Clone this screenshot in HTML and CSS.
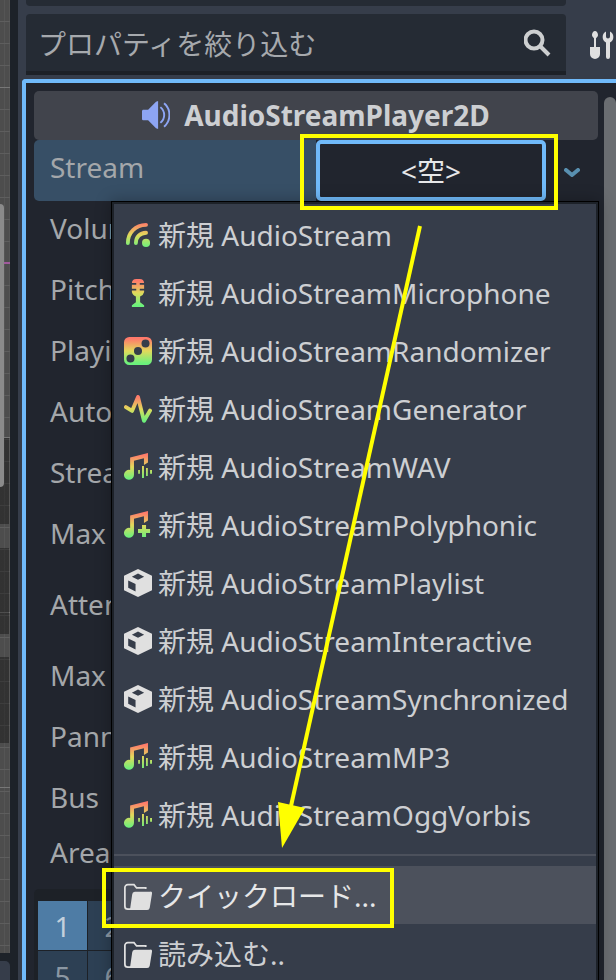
FILE: index.html
```html
<!DOCTYPE html>
<html lang="ja">
<head>
    <meta charset="UTF-8">
    <meta name="viewport" content="width=device-width, initial-scale=1.0">
    <title>インスペクター</title>
    <link rel="stylesheet" href="styles.css">
</head>
<body>
    <!-- アイコン定義 -->
    <svg class="icon-defs" width="0" height="0" aria-hidden="true">
        <defs>
            <linearGradient id="audio" gradientUnits="userSpaceOnUse" x1="0" y1="1" x2="0" y2="15">
                <stop offset="0" stop-color="#ff7a6b"/>
                <stop offset="0.5" stop-color="#e1da5b"/>
                <stop offset="1" stop-color="#6bf17c"/>
            </linearGradient>
            <symbol id="i-stream" viewBox="0 0 16 16">
                <g fill="none" stroke="url(#audio)" stroke-width="2.2" stroke-linecap="round">
                    <path d="M2.2 12.6C2.2 6.6 6.6 2.3 12.6 2.2"/>
                    <path d="M6.8 12.6C6.8 9.2 9.2 6.8 12.6 6.7"/>
                </g>
                <circle cx="12.6" cy="12.5" r="2.3" fill="url(#audio)"/>
            </symbol>
            <symbol id="i-mic" viewBox="0 0 16 16">
                <path fill="url(#audio)" d="M7 0h2a2.5 2.5 0 0 1 2.5 2.300H9v1h2.500v2.300H9v1h2.500v.8A3.500 3.500 0 0 1 9.200 10v3.300l2.300 1.700v1h-7v-1l2.300-1.700V10a3.500 3.500 0 0 1-2.300-2.600v-.8H7v-1H4.500V3.300H7v-1H4.500A2.500 2.500 0 0 1 7 0z"/>
            </symbol>
            <symbol id="i-random" viewBox="0 0 16 16">
                <path fill="url(#audio)" fill-rule="evenodd" d="M3 0h10a3 3 0 0 1 3 3v10a3 3 0 0 1-3 3H3a3 3 0 0 1-3-3V3a3 3 0 0 1 3-3zM12.3 1.4a2.3 2.3 0 1 0 0 4.6 2.3 2.3 0 0 0 0-4.6zM8 5.7a2.3 2.3 0 1 0 0 4.6 2.3 2.3 0 0 0 0-4.6zM3.7 10a2.3 2.3 0 1 0 0 4.6 2.3 2.3 0 0 0 0-4.6z"/>
            </symbol>
            <symbol id="i-generator" viewBox="0 0 16 16">
                <path fill="none" stroke="url(#audio)" stroke-width="2.2" stroke-linecap="round" stroke-linejoin="round" d="M1.1 6.9l3.5 2.2L8 1.1l3.4 13.7L14.9 8.9"/>
            </symbol>
            <symbol id="i-note" viewBox="0 0 16 16">
                <path fill="url(#audio)" d="M13.7 0v5.4l-2.3 1.5V3L5.7 4.4v8.1A2.85 2.85 0 1 1 3.5 9.7V2.6z"/>
            </symbol>
            <symbol id="i-wave" viewBox="0 0 16 16">
                <use href="#i-note"/>
                <path fill="url(#audio)" d="M8.1 9.7h1v2.2h-1zM10.3 7.4h1.1v6.9h-1.1zM12.6 8.6h1v4.6h-1zM14.9 9.7H16v2.2h-1.1z"/>
            </symbol>
            <symbol id="i-poly" viewBox="0 0 16 16">
                <use href="#i-note"/>
                <path fill="url(#audio)" d="M10.3 8h2.3v2.3h2.3v2.3h-2.3v2.3h-2.3v-2.3H8v-2.3h2.3z"/>
            </symbol>
            <symbol id="i-cube" viewBox="0 0 16 16">
                <path fill="#e0e0e0" fill-rule="evenodd" d="M8 0l8 3.8v8.4L8 16l-8-3.8V3.800zM8 2.600L4.500 4.400 8 6.100l3.500-1.700zM2.400 6.600v4.100l4.200 2.100V8.600z"/>
            </symbol>
            <symbol id="i-folder" viewBox="0 0 16 16">
                <path fill="none" stroke="#e0e0e0" d="M12.4 4V3.4H7.2L5.7 1.500H2.200A1.700 1.700 0 0 0 .5 3.200v10.600a1.700 1.700 0 0 0 1.700 1.700H4"/>
                <path fill="#e0e0e0" d="M6.200 5.500H15a1 1 0 0 1 1 1.200l-1.300 8A1.500 1.500 0 0 1 13.200 16H3.400l1.300-9a1.600 1.600 0 0 1 1.500-1.500z"/>
            </symbol>
        </defs>
    </svg>

    <div class="main-area">
        <div class="viewport"></div>
        <div class="bottom-panel"></div>
    </div>

    <div class="dock">
        <div class="object-bar"></div>

        <div class="filter-row">
            <label class="filter">
                <input type="text" placeholder="プロパティを絞り込む" aria-label="プロパティを絞り込む">
                <svg class="icon" viewBox="0 0 28 28" fill="none" stroke="#cdcfd0" stroke-width="4">
                    <circle cx="10" cy="11" r="8.5"/>
                    <path d="M16 17l9 9"/>
                </svg>
            </label>
            <button class="tools-btn" type="button" aria-label="ツール">
                <svg class="icon" viewBox="0 0 28 28" fill="#e0e0e0">
                    <path d="M7 0c1.700 0 3 2 3 4 0 1.500-1 2.300-2 3.200V16h4v7a5 5 0 0 1-10 0v-7h4V7.200C5 6.300 4 5.500 4 4c0-2 1.300-4 3-4z"/>
                    <path d="M18 .5v5a2 2 0 0 0 4 0v-5a6.200 6.200 0 0 1 0 11V26a2 2 0 0 1-4 0V11.500a6.200 6.200 0 0 1 0-11z"/>
                </svg>
            </button>
        </div>

        <div class="inspector">
            <div class="properties">
                <h2 class="category">
                    <svg class="icon" viewBox="0 0 16 16">
                        <path fill="#8da5f3" d="M0 5.500L.5 5h3L8 .4 9.200 0v16L8 15.600 3.500 11h-3L0 10.500z"/>
                        <g fill="none" stroke="#8da5f3" stroke-width="1.1">
                            <path d="M10.5 3.500c2.900 2.400 2.900 6.600 0 9"/>
                            <path d="M12.600 1.300c4.100 3.400 4.100 10 0 13.400"/>
                        </g>
                    </svg>
                    AudioStreamPlayer2D
                </h2>

                <div class="property stream">
                    <span class="name">Stream</span>
                    <div class="value">
                        <button class="value-btn" type="button">&lt;空&gt;</button>
                        <span class="mark mark-value"></span>
                    </div>
                    <button class="arrow-btn" type="button" aria-label="メニューを開く">
                        <svg width="16" height="10" viewBox="0 0 16 10" fill="none" stroke="#5990b0" stroke-width="4" stroke-linecap="round" stroke-linejoin="round">
                            <path d="M2 2l6 5 6-5"/>
                        </svg>
                    </button>

                    <!-- リソースメニュー -->
                    <div class="menu" role="menu">
                        <button type="button" role="menuitem"><svg class="icon"><use href="#i-stream"/></svg>新規 AudioStream</button>
                        <button type="button" role="menuitem"><svg class="icon"><use href="#i-mic"/></svg>新規 AudioStreamMicrophone</button>
                        <button type="button" role="menuitem"><svg class="icon"><use href="#i-random"/></svg>新規 AudioStreamRandomizer</button>
                        <button type="button" role="menuitem"><svg class="icon"><use href="#i-generator"/></svg>新規 AudioStreamGenerator</button>
                        <button type="button" role="menuitem"><svg class="icon"><use href="#i-wave"/></svg>新規 AudioStreamWAV</button>
                        <button type="button" role="menuitem"><svg class="icon"><use href="#i-poly"/></svg>新規 AudioStreamPolyphonic</button>
                        <button type="button" role="menuitem"><svg class="icon"><use href="#i-cube"/></svg>新規 AudioStreamPlaylist</button>
                        <button type="button" role="menuitem"><svg class="icon"><use href="#i-cube"/></svg>新規 AudioStreamInteractive</button>
                        <button type="button" role="menuitem"><svg class="icon"><use href="#i-cube"/></svg>新規 AudioStreamSynchronized</button>
                        <button type="button" role="menuitem"><svg class="icon"><use href="#i-wave"/></svg>新規 AudioStreamMP3</button>
                        <button type="button" role="menuitem"><svg class="icon"><use href="#i-wave"/></svg>新規 AudioStreamOggVorbis</button>
                        <hr>
                        <button class="load hover" type="button" role="menuitem"><svg class="icon"><use href="#i-folder"/></svg>クイックロード...<span class="mark mark-load"></span></button>
                        <button class="load" type="button" role="menuitem"><svg class="icon"><use href="#i-folder"/></svg>読み込む..</button>

                        <svg class="arrow" width="150" height="626" viewBox="0 0 150 626">
                            <path d="M146 2L17 582" stroke="#ffff00" stroke-width="4"/>
                            <path d="M4 578l27 6L8 624z" fill="#ffff00"/>
                        </svg>
                    </div>
                </div>

                <div class="property"><span class="name">Volume</span></div>
                <div class="property"><span class="name">Pitch</span></div>
                <div class="property"><span class="name">Playing</span></div>
                <div class="property"><span class="name">Autoplay</span></div>
                <div class="property"><span class="name">Stream</span></div>
                <div class="property"><span class="name">Max</span></div>
                <div class="property tall"><span class="name">Attenuation</span></div>
                <div class="property"><span class="name">Max</span></div>
                <div class="property"><span class="name">Panning</span></div>
                <div class="property"><span class="name">Bus</span></div>
                <div class="property short"><span class="name">Area</span></div>

                <div class="layers">
                    <button class="on" type="button">1</button>
                    <button type="button">2</button>
                    <button type="button">5</button>
                    <button type="button">6</button>
                </div>
            </div>
            <div class="scrollbar"></div>
        </div>
    </div>
</body>
</html>
```
FILE: styles.css
```css
* {
    box-sizing: border-box;
}

body {
    margin: 0;
    height: 100vh;
    display: flex;
    overflow: hidden;
    background: #1d2229;
    color: #cdcfd2;
    font-family: "Noto Sans", "Noto Sans CJK JP", sans-serif;
    font-size: 28px;
    line-height: 38px;
}

button,
input {
    margin: 0;
    padding: 0;
    border: none;
    background: none;
    color: inherit;
    font: inherit;
}

.icon-defs {
    position: absolute;
}

.icon {
    width: 28px;
    height: 28px;
    flex: none;
}

/* 左の2Dビュー */
.main-area {
    width: 10px;
    margin-right: 8px;
    display: flex;
    flex-direction: column;
    gap: 8px;
}

.viewport {
    position: relative;
    flex: 1;
    background:
        linear-gradient(#a05a9c, #a05a9c) 0 262px / 10px 2px no-repeat,
        repeating-linear-gradient(transparent 0 87px, #777 87px 88px, transparent 88px 175px),
        repeating-linear-gradient(transparent 0 21px, #5e5e5e 21px 22px),
        repeating-linear-gradient(90deg, #4d4d4d 0 4px, #555 4px 5px);
}

.viewport::before {
    content: "";
    position: absolute;
    z-index: 1;
    left: 0;
    top: 204px;
    width: 4px;
    height: 283px;
    border-radius: 0 4px 4px 0;
    background: #8a8a8a;
}

.viewport::after {
    content: "";
    position: absolute;
    left: 0;
    top: 438px;
    width: 9px;
    height: 305px;
    background: linear-gradient(rgba(0, 0, 0, 0.35) 0 86px, transparent 86px 110px, rgba(0, 0, 0, 0.35) 110px 196px, transparent 196px 219px, rgba(0, 0, 0, 0.35) 219px);
}

.bottom-panel {
    height: 19px;
    border-radius: 0 5px 0 0;
    background: #363d4a;
}

.dock {
    flex: 1;
    min-width: 0;
    display: flex;
    flex-direction: column;
    background: #363d4a;
}

.object-bar {
    flex: none;
    height: 6px;
    margin: 0 50px 8px 8px;
    border-radius: 0 0 4px 4px;
    background: #252b34;
}

.filter-row {
    flex: none;
    display: flex;
    margin: 0 0 4px 8px;
}

.filter {
    flex: 1;
    min-width: 0;
    height: 61px;
    display: flex;
    align-items: center;
    padding: 0 14px 0 12px;
    border-bottom: 4px solid #1d2127;
    border-radius: 4px 4px 0 0;
    background: #252b34;
}

.filter input {
    flex: 1;
    min-width: 0;
    height: 40px;
    padding-top: 2px;
    outline: none;
}

.filter input::placeholder {
    color: #a6a9ad;
    opacity: 1;
}

.tools-btn {
    width: 50px;
    padding-left: 22px;
    display: flex;
    align-items: center;
}

.inspector {
    flex: 1;
    min-height: 0;
    display: flex;
    margin-left: 4px;
    padding: 8px 0 0 8px;
    border: solid #70bafa;
    border-width: 4px 0 0 4px;
    border-radius: 4px 0 0 0;
    background: #21252e;
}

.properties {
    flex: 1;
    min-width: 0;
    margin-right: 6px;
}

.scrollbar {
    width: 12px;
    margin-top: 6px;
    border-radius: 6px 6px 0 0;
    background: #6a6d71;
}

.category {
    display: flex;
    align-items: center;
    justify-content: center;
    gap: 14px;
    height: 49px;
    margin: 0;
    padding-bottom: 2px;
    border-radius: 5px;
    background: #41444c;
    font-size: 28px;
    font-weight: 700;
}

.property {
    position: relative;
    display: flex;
    height: 61px;
    color: #a4a7aa;
}

.property.tall {
    height: 81px;
}

.property.short {
    height: 50px;
}

.name {
    width: 50%;
    display: flex;
    align-items: center;
    padding: 0 0 8px 16px;
    border-radius: 5px 0 0 5px;
    white-space: nowrap;
}

.stream .name {
    background: #374f66;
}

.value {
    position: relative;
    flex: 1;
}

.value-btn {
    width: 100%;
    height: 100%;
    border: 4px solid #70bafa;
    border-radius: 5px;
    background: #21252e;
    color: #e6e7e8;
}

.arrow-btn {
    width: 52px;
    display: flex;
    align-items: center;
    justify-content: center;
    padding-top: 4px;
}

.menu {
    position: absolute;
    z-index: 2;
    top: 64px;
    left: 80px;
    right: 2px;
    padding: 3px 0;
    background: #363d4a;
    box-shadow: 0 0 0 2px #1d2229, 0 0 0 3px #000, 0 0 14px 4px rgba(0, 0, 0, 0.25);
    color: #cdcfd2;
}

.menu button {
    position: relative;
    width: 100%;
    height: 58px;
    display: flex;
    align-items: center;
    gap: 6px;
    padding: 0 10px 2px;
    white-space: nowrap;
}

.menu .load {
    padding: 2px 10px 0;
}

.menu .hover {
    background: #4c515c;
    color: #e6e7e8;
}

.menu hr {
    height: 2px;
    margin: 9px 0 10px;
    border: none;
    background: #4c515c;
}

/* 操作手順の目印 */
.mark {
    position: absolute;
    z-index: 3;
    border: 4px solid #ffff00;
    pointer-events: none;
}

.mark-value {
    inset: -6px -12px -9px -16px;
}

.mark-load {
    top: 2px;
    left: -12px;
    width: 292px;
    height: 60px;
}

.arrow {
    position: absolute;
    top: 20px;
    left: 160px;
    pointer-events: none;
}

.layers {
    display: grid;
    grid-template-columns: 49px 49px;
    grid-auto-rows: 49px;
    gap: 1px;
    margin-top: 8px;
    padding: 12px 4px;
    border-radius: 5px;
    background: #1d2127;
}

.layers button {
    background: #2d4054;
    color: #8b97a3;
}

.layers .on {
    background: #4e7ca5;
    color: #c3d0dc;
}
```
